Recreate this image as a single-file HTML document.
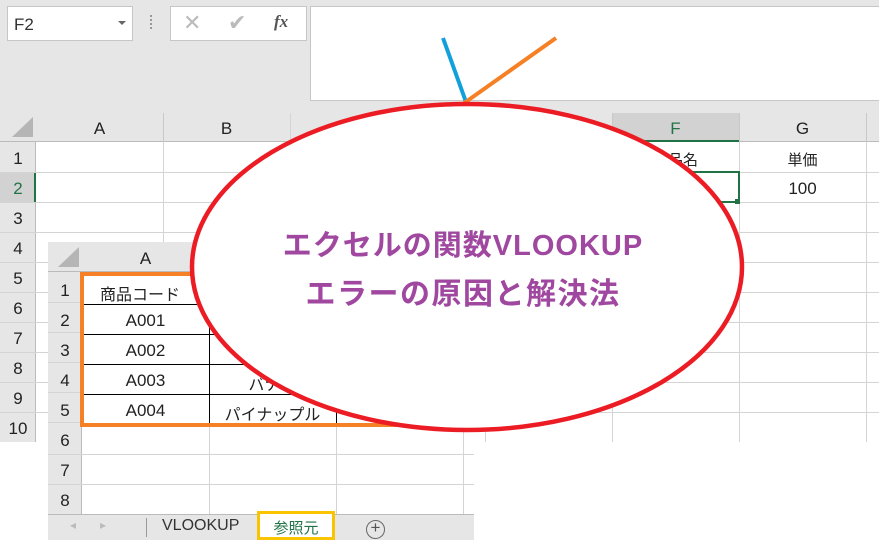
<!DOCTYPE html>
<html><head><meta charset="utf-8"><style>
*{margin:0;padding:0;box-sizing:border-box}
body{width:879px;height:544px;overflow:hidden;background:#fff;position:relative;font-family:"Liberation Sans","Noto Sans CJK JP",sans-serif}
.a{position:absolute}
.t{position:absolute;font-size:16px;color:#222;text-align:center}
.c{position:absolute;font-size:17px;color:#222;text-align:center}
</style></head><body>
<div class="a" style="left:0;top:0;width:879px;height:113px;background:#e6e6e6"></div>
<div class="a" style="left:7px;top:6px;width:126px;height:35px;background:#fff;border:1px solid #c6c6c6"></div>
<div class="t" style="left:14px;top:15px;font-size:17px;color:#333">F2</div>
<div class="a" style="left:118px;top:21px;border-left:4px solid transparent;border-right:4px solid transparent;border-top:4px solid #666"></div>
<div class="a" style="left:150px;top:15px;width:2px;height:14px;border-left:2px dotted #999"></div>
<div class="a" style="left:170px;top:6px;width:137px;height:35px;background:#fff;border:1px solid #c6c6c6"></div>
<div class="t" style="left:183px;top:10px;font-size:22px;color:#bbb">✕</div>
<div class="t" style="left:228px;top:10px;font-size:22px;color:#bbb">✔</div>
<div class="t" style="left:274px;top:12px;font-size:17px;color:#555;font-style:italic;font-family:'Liberation Serif',serif;font-weight:bold">fx</div>
<div class="a" style="left:310px;top:6px;width:569px;height:95px;background:#fff;border:1px solid #c6c6c6;border-right:none"></div>
<!-- main grid -->
<div class="a" style="left:0;top:113px;width:879px;height:29px;background:#e6e6e6;border-bottom:1px solid #bbb"></div>
<div class="a" style="left:612px;top:113px;width:127px;height:29px;background:#d2d2d2;border-bottom:2px solid #217346"></div>
<div class="a" style="left:0;top:142px;width:36px;height:300px;background:#e6e6e6;border-right:1px solid #bbb"></div>
<div class="a" style="left:0;top:172px;width:36px;height:30px;background:#d2d2d2;border-right:2px solid #217346"></div>
<svg class="a" style="left:0;top:0" width="879" height="544">
<polygon points="12,137 33,137 33,117" fill="#b5b5b5"/>
<g stroke="#d4d4d4" stroke-width="1">
<line x1="163.5" y1="113" x2="163.5" y2="442"/><line x1="290.5" y1="113" x2="290.5" y2="442"/>
<line x1="485.5" y1="113" x2="485.5" y2="442"/><line x1="612.5" y1="113" x2="612.5" y2="442"/>
<line x1="739.5" y1="113" x2="739.5" y2="442"/><line x1="866.5" y1="113" x2="866.5" y2="442"/>
<line x1="36" y1="172.5" x2="879" y2="172.5"/><line x1="36" y1="202.5" x2="879" y2="202.5"/>
<line x1="36" y1="232.5" x2="879" y2="232.5"/><line x1="36" y1="262.5" x2="879" y2="262.5"/>
<line x1="36" y1="292.5" x2="879" y2="292.5"/><line x1="36" y1="322.5" x2="879" y2="322.5"/>
<line x1="36" y1="352.5" x2="879" y2="352.5"/><line x1="36" y1="382.5" x2="879" y2="382.5"/>
<line x1="36" y1="412.5" x2="879" y2="412.5"/>
<line x1="0" y1="172.5" x2="36" y2="172.5"/><line x1="0" y1="202.5" x2="36" y2="202.5"/><line x1="0" y1="232.5" x2="36" y2="232.5"/><line x1="0" y1="262.5" x2="36" y2="262.5"/><line x1="0" y1="292.5" x2="36" y2="292.5"/><line x1="0" y1="322.5" x2="36" y2="322.5"/><line x1="0" y1="352.5" x2="36" y2="352.5"/><line x1="0" y1="382.5" x2="36" y2="382.5"/><line x1="0" y1="412.5" x2="36" y2="412.5"/>
</g>
<g stroke="#c8c8c8"><line x1="163.5" y1="113" x2="163.5" y2="142"/><line x1="612.5" y1="113" x2="612.5" y2="142"/><line x1="739.5" y1="113" x2="739.5" y2="142"/><line x1="866.5" y1="113" x2="866.5" y2="142"/></g>
<rect x="612" y="172" width="127" height="30" fill="none" stroke="#217346" stroke-width="2"/>
<rect x="735" y="199" width="5" height="5" fill="#217346"/>
</svg>
<div class="c" style="left:36px;top:119px;width:127px">A</div>
<div class="c" style="left:163px;top:119px;width:127px">B</div>
<div class="c" style="left:612px;top:119px;width:127px;color:#217346">F</div>
<div class="c" style="left:739px;top:119px;width:127px">G</div>
<div class="c" style="left:0;top:149px;width:36px">1</div>
<div class="c" style="left:0;top:179px;width:36px;color:#217346">2</div>
<div class="c" style="left:0;top:209px;width:36px">3</div>
<div class="c" style="left:0;top:239px;width:36px">4</div>
<div class="c" style="left:0;top:269px;width:36px">5</div>
<div class="c" style="left:0;top:299px;width:36px">6</div>
<div class="c" style="left:0;top:329px;width:36px">7</div>
<div class="c" style="left:0;top:359px;width:36px">8</div>
<div class="c" style="left:0;top:389px;width:36px">9</div>
<div class="c" style="left:0;top:419px;width:36px">10</div>
<div class="t" style="left:612px;top:149px;width:127px;font-size:15px">商品名</div>
<div class="t" style="left:739px;top:149px;width:127px;font-size:15px">単価</div>
<div class="c" style="left:739px;top:179px;width:127px">100</div>
<!-- second sheet -->
<div class="a" style="left:48px;top:242px;width:426px;height:298px;background:#fff"></div>
<div class="a" style="left:48px;top:242px;width:426px;height:30px;background:#e6e6e6;border-bottom:1px solid #bbb"></div>
<div class="a" style="left:48px;top:272px;width:34px;height:242px;background:#e6e6e6;border-right:1px solid #bbb"></div>
<svg class="a" style="left:0;top:0" width="879" height="544">
<polygon points="58,267 79,267 79,247" fill="#b5b5b5"/>
<g stroke="#d4d4d4">
<line x1="209.5" y1="242" x2="209.5" y2="514"/><line x1="336.5" y1="242" x2="336.5" y2="514"/><line x1="463.5" y1="242" x2="463.5" y2="514"/>
<line x1="82" y1="454.5" x2="474" y2="454.5"/><line x1="82" y1="484.5" x2="474" y2="484.5"/>
<line x1="48" y1="302.5" x2="82" y2="302.5"/><line x1="48" y1="332.5" x2="82" y2="332.5"/><line x1="48" y1="362.5" x2="82" y2="362.5"/><line x1="48" y1="392.5" x2="82" y2="392.5"/><line x1="48" y1="422.5" x2="82" y2="422.5"/><line x1="48" y1="454.5" x2="82" y2="454.5"/><line x1="48" y1="484.5" x2="82" y2="484.5"/>
</g>
<g stroke="#000">
<line x1="82" y1="304.5" x2="420" y2="304.5"/><line x1="82" y1="334.5" x2="420" y2="334.5"/><line x1="82" y1="364.5" x2="420" y2="364.5"/><line x1="82" y1="394.5" x2="420" y2="394.5"/>
<line x1="209.5" y1="304" x2="209.5" y2="424"/><line x1="336.5" y1="304" x2="336.5" y2="424"/>
</g>
<rect x="82" y="274" width="338" height="151" fill="none" stroke="#f58025" stroke-width="4"/>
</svg>
<div class="c" style="left:82px;top:249px;width:127px">A</div>
<div class="c" style="left:48px;top:281px;width:34px">1</div>
<div class="c" style="left:48px;top:311px;width:34px">2</div>
<div class="c" style="left:48px;top:341px;width:34px">3</div>
<div class="c" style="left:48px;top:371px;width:34px">4</div>
<div class="c" style="left:48px;top:401px;width:34px">5</div>
<div class="c" style="left:48px;top:431px;width:34px">6</div>
<div class="c" style="left:48px;top:461px;width:34px">7</div>
<div class="c" style="left:48px;top:491px;width:34px">8</div>
<div class="t" style="left:86px;top:281px;width:125px;font-size:16px;text-align:left;padding-left:14px">商品コード</div>
<div class="c" style="left:82px;top:311px;width:127px">A001</div>
<div class="c" style="left:82px;top:341px;width:127px">A002</div>
<div class="c" style="left:82px;top:371px;width:127px">A003</div>
<div class="c" style="left:82px;top:401px;width:127px">A004</div>
<div class="t" style="left:209px;top:401px;width:127px;font-size:16px">パイナップル</div>
<div class="t" style="left:209px;top:371px;width:127px;font-size:16px">バナナ</div>
<!-- tab bar -->
<div class="a" style="left:48px;top:514px;width:426px;height:26px;background:#e6e6e6;border-top:1px solid #bbb"></div>
<div class="t" style="left:70px;top:518px;font-size:12px;color:#bbb">◂</div>
<div class="t" style="left:100px;top:518px;font-size:12px;color:#bbb">▸</div>
<div class="a" style="left:146px;top:518px;width:1px;height:19px;background:#999"></div>
<div class="t" style="left:162px;top:517px;color:#333">VLOOKUP</div>
<div class="a" style="left:257px;top:511px;width:78px;height:29px;background:#fff;border:3px solid #fbc400"></div>
<div class="t" style="left:257px;top:517px;width:78px;color:#217346;font-size:15px">参照元</div>
<div class="a" style="left:366px;top:520px;width:19px;height:19px;border:1.5px solid #666;border-radius:50%"></div>
<div class="t" style="left:366px;top:518px;width:19px;font-size:17px;color:#555;line-height:20px">+</div>
<!-- overlay -->
<svg class="a" style="left:0;top:0" width="879" height="544">
<line x1="443" y1="38" x2="466" y2="102" stroke="#11a0dc" stroke-width="4"/>
<line x1="556" y1="38" x2="460" y2="106" stroke="#f58025" stroke-width="4"/>
<ellipse cx="467" cy="267" rx="275" ry="163" fill="#fff" stroke="#ec1c24" stroke-width="4.5"/>
<g font-family="'Liberation Sans','Noto Sans CJK JP',sans-serif" font-weight="bold" fill="#a048a0" text-anchor="middle">
<text x="463" y="255" font-size="29" letter-spacing="1">エクセルの関数VLOOKUP</text>
<text x="463" y="304" font-size="30" letter-spacing="1.5">エラーの原因と解決法</text>
</g>
</svg>
</body></html>
